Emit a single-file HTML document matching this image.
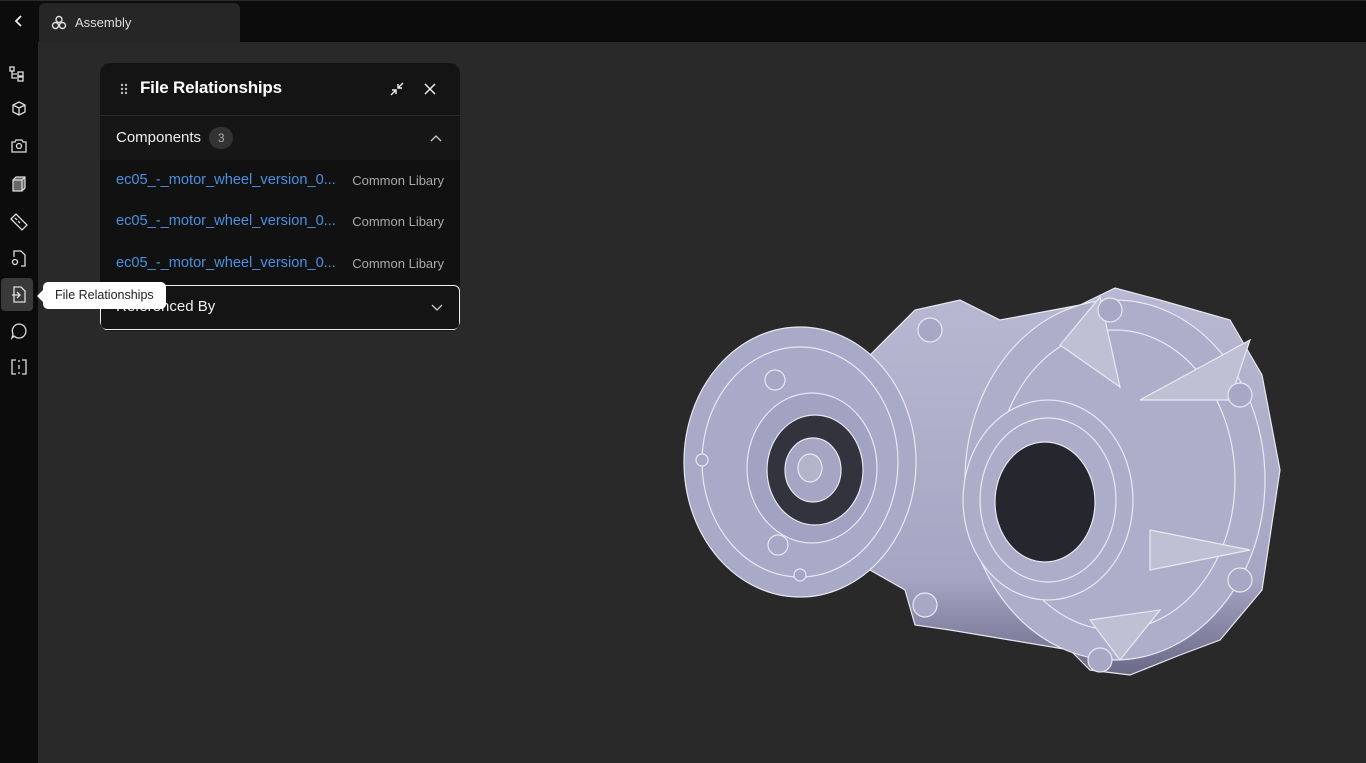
<!DOCTYPE html>
<html><head><meta charset="utf-8"><style>
*{margin:0;padding:0;box-sizing:border-box}
body{width:1366px;height:763px;background:#292929;font-family:"Liberation Sans",sans-serif;overflow:hidden;position:relative}
.top{position:absolute;left:0;top:0;width:1366px;height:42px;background:#0c0c0d;border-top:1px solid #2a2a2a}
.tab{position:absolute;left:39px;top:2px;width:201px;height:40px;background:#262626;border-radius:6px 6px 0 0;color:#ddd;font-size:13px;line-height:40px;padding-left:36px}
.side{position:absolute;left:0;top:42px;width:38px;height:721px;background:#0c0c0d}
.ic{position:absolute;left:7px;width:24px;height:24px}
.panel{position:absolute;left:100px;top:63px;width:360px;height:268px;background:#141414;border-radius:10px;color:#eee;overflow:hidden}
.row{position:absolute;left:0;width:360px;height:41px;font-size:14px;line-height:41px}
.link{position:absolute;left:16px;color:#4a90e2;font-size:14.6px}
.lib{position:absolute;right:16px;color:#aaa;font-size:13px}
.tip{position:absolute;left:43px;top:282px;width:123px;height:27px;background:#fff;border-radius:5px;color:#222;font-size:12.5px;line-height:27px;padding-left:12px}
.tip:before{content:"";position:absolute;left:-6px;top:8px;border:6px solid transparent;border-left:0;border-right-color:#fff}
</style></head><body>
<div class="top">
<svg style="position:absolute;left:12px;top:13px" width="14" height="14" viewBox="0 0 14 14"><path d="M9 2L4 7l5 5" stroke="#eee" stroke-width="1.8" fill="none"/></svg>
<div class="tab"><svg style="position:absolute;left:12px;top:12px" width="16" height="16" viewBox="0 0 16 16" fill="none" stroke="#ddd" stroke-width="1.4"><circle cx="8" cy="4.5" r="3"/><circle cx="4.5" cy="10.5" r="3"/><circle cx="11.5" cy="10.5" r="3"/></svg>Assembly</div>
</div>
<div class="side">
<svg class="ic" style="top:20px" viewBox="0 0 24 24" fill="none" stroke="#ddd" stroke-width="1.3"><rect x="3" y="5" width="4" height="4"/><path d="M5 9v7h5M5 12h5"/><rect x="11" y="10" width="5" height="4"/><rect x="11" y="15" width="5" height="4"/></svg>
<svg class="ic" style="top:56px" viewBox="0 0 24 24" fill="none" stroke="#ddd" stroke-width="1.3"><path d="M12 4l6 3v7l-6 3-6-3V7z M6 7l6 3 6-3 M12 10v7"/></svg>
<svg class="ic" style="top:92px" viewBox="0 0 24 24" fill="none" stroke="#ddd" stroke-width="1.3"><path d="M5 8h3l1-2h6l1 2h3v10H5z"/><circle cx="12" cy="12" r="2.5"/></svg>
<svg class="ic" style="top:130px" viewBox="0 0 24 24"><path d="M6 8l3-3h9v11l-3 3H6z" fill="#666" stroke="#ddd" stroke-width="1.2"/><path d="M6 8h9v11M15 8l3-3" stroke="#ddd" fill="none" stroke-width="1.2"/></svg>
<svg class="ic" style="top:168px" viewBox="0 0 24 24" fill="none" stroke="#ddd" stroke-width="1.3"><path d="M4 9l5-5 11 11-5 5z M8 8l2 2M11 11l2 2"/></svg>
<svg class="ic" style="top:204px" viewBox="0 0 24 24" fill="none" stroke="#ddd" stroke-width="1.3"><path d="M7 11V5h7l4 4v11h-4"/><circle cx="8" cy="16" r="2.5"/></svg>
<div style="position:absolute;left:1px;top:236px;width:32px;height:33px;background:#3a3a3a;border-radius:4px"></div>
<svg class="ic" style="top:240px" viewBox="0 0 24 24" fill="none" stroke="#ddd" stroke-width="1.3"><path d="M7 5h7l4 4v11H7z M5 13h7M10 10l3 3-3 3"/></svg>
<svg class="ic" style="top:277px" viewBox="0 0 24 24" fill="none" stroke="#ddd" stroke-width="1.3"><path d="M12 5a7 7 0 1 1-5 12l-2 2 1-4a7 7 0 0 1 6-10z"/></svg>
<svg class="ic" style="top:313px" viewBox="0 0 24 24" fill="none" stroke="#ddd" stroke-width="1.3"><path d="M9 5H5v14h4M15 5h4v14h-4M12 5v2M12 10v4M12 17v2"/></svg>
</div>
<div class="panel">
<svg style="position:absolute;left:19px;top:19px" width="10" height="14" viewBox="0 0 10 14" fill="#bbb"><circle cx="3" cy="3" r="1.2"/><circle cx="7" cy="3" r="1.2"/><circle cx="3" cy="7" r="1.2"/><circle cx="7" cy="7" r="1.2"/><circle cx="3" cy="11" r="1.2"/><circle cx="7" cy="11" r="1.2"/></svg>
<div style="position:absolute;left:40px;top:15px;font-size:17px;font-weight:bold;color:#fff;letter-spacing:-0.2px">File Relationships</div>
<svg style="position:absolute;left:289px;top:18px" width="16" height="16" viewBox="0 0 16 16" fill="none" stroke="#eee" stroke-width="1.4"><path d="M2 14l5-5M3 9h4v4M14 2l-5 5M9 3v4h4"/></svg>
<svg style="position:absolute;left:324px;top:20px" width="12" height="12" viewBox="0 0 12 12" stroke="#eee" stroke-width="1.5"><path d="M1 1l10 10M11 1L1 11"/></svg>
<div style="position:absolute;left:0;top:52px;width:360px;height:1px;background:#2a2a2a"></div>
<div class="row" style="top:53px;height:44px;line-height:44px;font-size:15px;padding-left:16px;background:#161616">Components <span style="display:inline-block;width:24px;height:22px;border-radius:11px;background:#333;color:#aaa;font-size:12px;line-height:22px;text-align:center;margin-left:4px">3</span>
<svg style="position:absolute;left:330px;top:18px" width="12" height="8" viewBox="0 0 12 8" fill="none" stroke="#ccc" stroke-width="1.3"><path d="M1 7l5-5 5 5"/></svg></div>
<div style="position:absolute;top:97px;left:0;width:360px;height:124px;background:#111"></div>
<div class="row" style="top:97px"><span class="link">ec05_-_motor_wheel_version_0...</span><span class="lib">Common Libary</span></div>
<div class="row" style="top:138px"><span class="link">ec05_-_motor_wheel_version_0...</span><span class="lib">Common Libary</span></div>
<div class="row" style="top:180px"><span class="link">ec05_-_motor_wheel_version_0...</span><span class="lib">Common Libary</span></div>
<div style="position:absolute;left:0;top:222px;width:360px;height:45px;border:1.5px solid #eee;border-radius:6px;font-size:15px;line-height:42px;padding-left:15px;background:#141414">Referenced By
<svg style="position:absolute;left:330px;top:18px" width="12" height="8" viewBox="0 0 12 8" fill="none" stroke="#ccc" stroke-width="1.3"><path d="M1 1l5 5 5-5"/></svg></div>
</div>
<div class="tip">File Relationships</div>
<svg style="position:absolute;left:0;top:0" width="1366" height="763" viewBox="0 0 1366 763">
<defs><linearGradient id="g" x1="0" y1="0" x2="0" y2="1"><stop offset="0" stop-color="#b8b8d2"/><stop offset=".75" stop-color="#a6a6c4"/><stop offset="1" stop-color="#6a6a88"/></linearGradient></defs>
<g stroke="#e8e8f2" stroke-width="1.2">
<polygon points="870,355 915,310 960,300 1000,320 1080,305 1115,288 1160,300 1230,320 1262,375 1280,470 1262,590 1220,640 1180,655 1130,675 1090,670 1070,650 1010,640 950,630 915,625 905,590 870,570" fill="url(#g)"/>
<ellipse cx="1115" cy="480" rx="150" ry="180" fill="#aeaecb"/>
<ellipse cx="1115" cy="480" rx="120" ry="150" fill="none"/>
<ellipse cx="800" cy="462" rx="116" ry="135" fill="#a9a9c8"/>
<ellipse cx="800" cy="462" rx="98" ry="115" fill="none"/>
<ellipse cx="812" cy="468" rx="65" ry="75" fill="#a2a2c2"/>
<ellipse cx="815" cy="470" rx="48" ry="55" fill="#33333d"/>
<ellipse cx="813" cy="470" rx="28" ry="32" fill="#a6a6c4"/>
<ellipse cx="810" cy="468" rx="12" ry="14" fill="#b4b4cc"/>
<ellipse cx="1048" cy="500" rx="85" ry="100" fill="#adadca"/>
<ellipse cx="1048" cy="500" rx="68" ry="82" fill="none"/>
<ellipse cx="1045" cy="502" rx="50" ry="60" fill="#26262e"/>
<path d="M1060 345l40-48 20 90zM1140 400l110-60-20 60zM1150 530l100 20-100 20zM1090 620l30 40 40-50z" fill="#c0c0d4"/>
<circle cx="1110" cy="310" r="12" fill="#a8a8c6"/><circle cx="930" cy="330" r="12" fill="#a8a8c6"/><circle cx="1240" cy="395" r="12" fill="#a8a8c6"/><circle cx="1240" cy="580" r="12" fill="#a8a8c6"/><circle cx="1100" cy="660" r="12" fill="#a8a8c6"/><circle cx="925" cy="605" r="12" fill="#a8a8c6"/>
<circle cx="775" cy="380" r="10" fill="#a8a8c6"/><circle cx="778" cy="545" r="10" fill="#a8a8c6"/><circle cx="702" cy="460" r="6" fill="#a8a8c6"/><circle cx="800" cy="575" r="6" fill="#a8a8c6"/>
</g>
</svg>
</body></html>
